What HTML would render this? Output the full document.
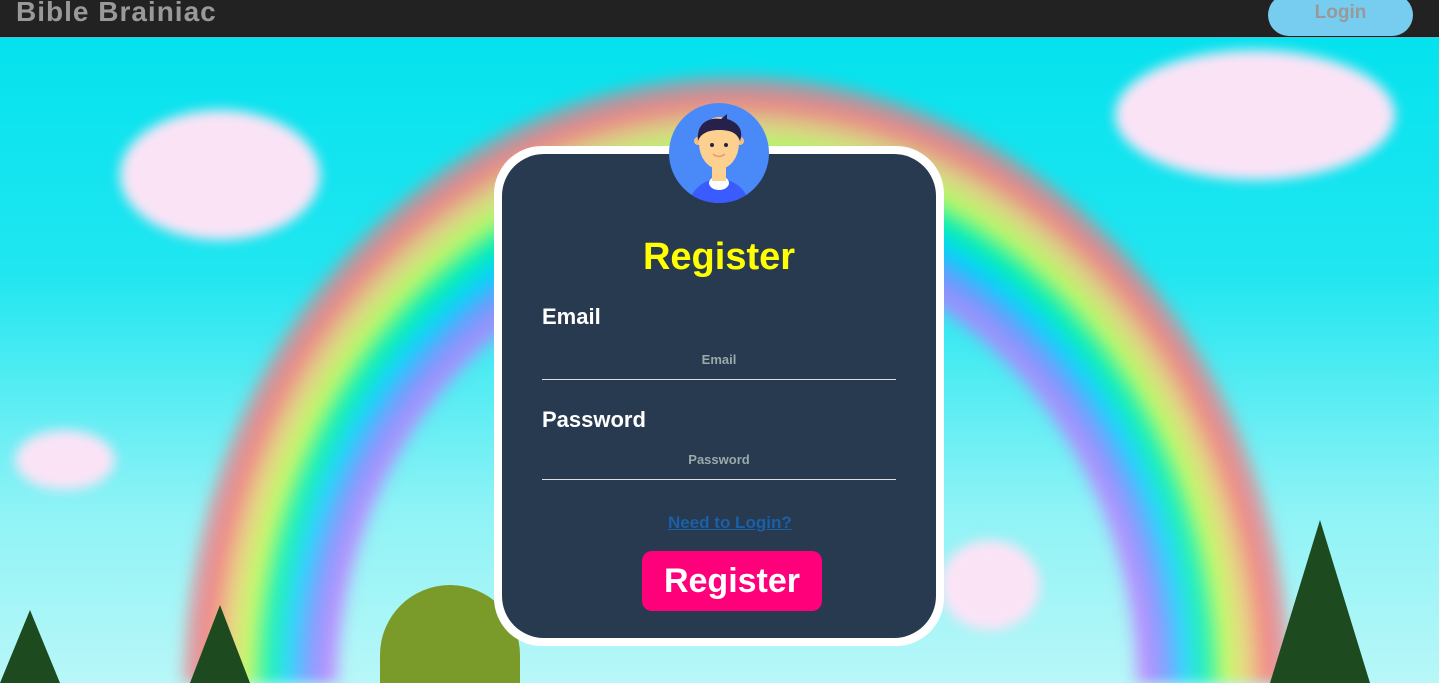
<!DOCTYPE html>
<html style="width:1439px;height:683px;overflow:hidden"><head><meta charset="utf-8"><style>
*{margin:0;padding:0;box-sizing:border-box}
body{width:1439px;height:683px;overflow:hidden;font-family:"Liberation Sans",sans-serif;position:relative}
.s{position:absolute;left:0;top:0;width:1439px;height:683px;overflow:hidden;
background:linear-gradient(#00e2ee 0%,#20e6f0 40%,#8ff3f6 75%,#b8f7f8 100%)}
.rain{position:absolute;left:0;top:0;width:1439px;height:683px;filter:blur(6px);
background:radial-gradient(ellipse 560px 620px at 737px 690px,transparent 70%,rgba(190,120,255,.8) 73%,rgba(120,140,255,.8) 76.5%,rgba(0,200,255,.7) 80%,rgba(0,240,170,.8) 83.5%,rgba(200,250,90,.9) 87.5%,rgba(240,210,120,.9) 91%,rgba(245,130,130,.95) 95%,rgba(240,120,130,.6) 98%,transparent 100%)}
.cloud{position:absolute;background:#fbe3f6;border-radius:50%;filter:blur(6px)}
.tree{position:absolute;width:0;height:0;border-left:30px solid transparent;border-right:30px solid transparent;border-bottom:78px solid #1e4a20}
nav{position:absolute;left:0;top:0;width:1439px;height:37px;background:#222;border-bottom:1px solid #600;overflow:hidden}
nav .t{position:absolute;left:16px;top:-4px;font-size:28px;font-weight:bold;color:#999;letter-spacing:1px}
nav .b{position:absolute;left:1268px;top:-6px;width:145px;height:42px;border-radius:21px;background:#76cdf0;color:#999;font-weight:bold;font-size:19px;text-align:center;line-height:38px}
.card{position:absolute;left:494px;top:146px;width:450px;height:500px;background:#fff;border-radius:48px}
.in{position:absolute;left:8px;top:8px;width:434px;height:484px;background:#283a50;border-radius:42px}
.av{position:absolute;left:669px;top:103px;width:100px;height:100px}
h1{position:absolute;left:0;width:434px;top:82px;text-align:center;color:#ffff00;font-size:38px;font-weight:bold}
.lab{position:absolute;left:40px;color:#fff;font-weight:bold;font-size:22px}
.inp{position:absolute;left:40px;width:354px;height:40px;border-bottom:1px solid #ddd;color:#9aa;font-size:13px;font-weight:bold;text-align:center;line-height:40px}
.lk{position:absolute;left:166px;top:359px;color:#1a5fa8;font-weight:bold;font-size:17px;text-decoration:underline}
.btn{position:absolute;left:140px;top:397px;width:180px;height:60px;background:#ff007a;border-radius:10px;color:#fff;font-size:34px;font-weight:bold;text-align:center;line-height:60px}
</style></head><body>
<div class="s">
<div class="rain"></div>
<div class="cloud" style="left:120px;top:110px;width:200px;height:130px"></div>
<div class="cloud" style="left:1115px;top:50px;width:280px;height:130px"></div>
<div class="cloud" style="left:15px;top:430px;width:100px;height:60px"></div>
<div class="cloud" style="left:940px;top:540px;width:100px;height:90px"></div>
<div class="tree" style="left:1270px;top:520px;border-bottom-width:163px;border-left-width:50px;border-right-width:50px"></div>
<div class="tree" style="left:190px;top:605px"></div>
<div class="tree" style="left:0;top:610px;border-bottom-width:73px"></div>
<div style="position:absolute;left:380px;top:585px;width:140px;height:98px;border-radius:70px 70px 0 0;background:#7a9a2a"></div>
<nav><div class="t">Bible Brainiac</div><div class="b">Login</div></nav>
<div class="card"><div class="in">
<h1>Register</h1>
<div class="lab" style="top:150px">Email</div>
<div class="inp" style="top:186px">Email</div>
<div class="lab" style="top:253px">Password</div>
<div class="inp" style="top:286px">Password</div>
<div class="lk">Need to Login?</div>
<div class="btn">Register</div>
</div></div>
<svg class="av" viewBox="0 0 100 100">
<circle cx="50" cy="50" r="50" fill="#4a8af8"/>
<clipPath id="c"><circle cx="50" cy="50" r="50"/></clipPath>
<g clip-path="url(#c)">
<ellipse cx="50" cy="104" rx="30" ry="28" fill="#3a5cff"/>
<ellipse cx="50" cy="80" rx="10" ry="7" fill="#fff"/>
<rect x="43" y="64" width="14" height="14" fill="#fcd08e"/>
<circle cx="29" cy="38" r="4" fill="#f8c080"/><circle cx="71" cy="38" r="4" fill="#f8c080"/>
<ellipse cx="50" cy="40" rx="20" ry="26" fill="#fcd08e"/>
<path d="M29 38 C27 20 40 14 52 16 L58 11 L58 16 C72 20 74 30 71 38 C68 30 62 27 50 27 C40 27 32 30 29 38Z" fill="#26214a"/>
<circle cx="43" cy="42" r="2" fill="#26214a"/><circle cx="57" cy="42" r="2" fill="#26214a"/>
<path d="M44 51 Q50 56 56 51" stroke="#e89a6a" stroke-width="1.5" fill="none"/>
</g></svg>
</div>
</body></html>
